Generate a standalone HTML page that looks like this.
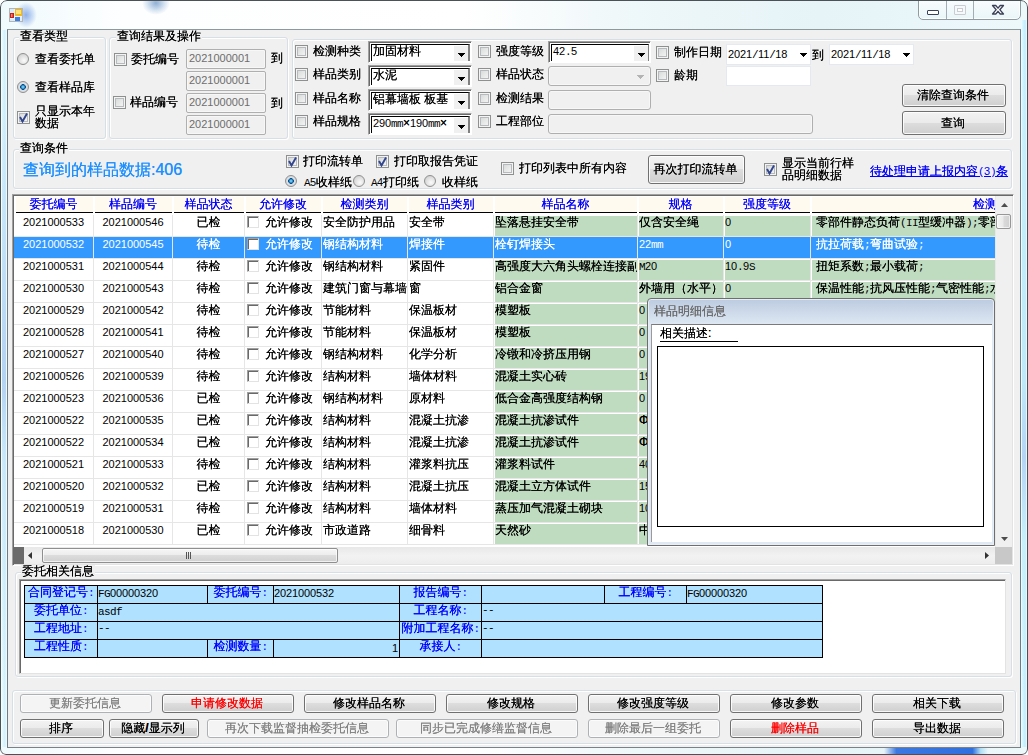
<!DOCTYPE html><html lang="zh-CN"><head><meta charset="utf-8"><title>样品库</title><style>
*{box-sizing:border-box;margin:0;padding:0}
html,body{width:1028px;height:755px;overflow:hidden;background:#fff}
body{font-family:"Liberation Sans","WenQuanYi Zen Hei",sans-serif;font-size:12px;line-height:12px;color:#000;position:relative;text-shadow:0 0 0}
.a{position:absolute}
.t{position:absolute;white-space:nowrap;line-height:12px;font-size:12px}
.n{font-size:11px;text-shadow:none}
.m{font-family:"Liberation Sans","WenQuanYi Zen Hei",sans-serif;font-size:11px;letter-spacing:-.12px;text-shadow:none}
.m i{font-family:"Liberation Mono",monospace;font-size:11px;font-style:normal;letter-spacing:-.6px}
.b{font-weight:bold}
#win{left:0;top:0;width:1028px;height:755px;border-radius:7px 7px 6px 6px;background:linear-gradient(90deg,#f0fafc 0,#fdfeff 12%,#ffffff 45%,#eef7f9 62%,#e6f4f7 80%,#edf8fb 100%);overflow:hidden}
#win:after{content:'';position:absolute;left:0;top:0;right:0;bottom:0;border:1px solid #4a5157;border-radius:7px 7px 6px 6px;pointer-events:none}
#client{left:7px;top:29px;width:1014px;height:719px;background:#f0f0f0;border:1px solid #6e7d85;border-top-color:#8c9a9e;border-bottom-color:#788288}
.gb{position:absolute;border:1px solid #d5dfe5;border-radius:3px;box-shadow:inset 1px 1px 0 #fff, 1px 1px 0 #fff}
.gl{position:absolute;background:#f0f0f0;white-space:nowrap;line-height:12px;padding:0 1px}
.cb{position:absolute;width:13px;height:13px;border:1px solid #8e8f8f;background:linear-gradient(135deg,#d2d4d4 0,#f6f6f6 90%);box-shadow:inset 0 0 0 1px #f4f4f4, inset 0 0 0 2px #b6babd}
.rb{position:absolute;width:12px;height:12px;border-radius:50%;border:1px solid #8e8f8f;background:radial-gradient(circle at 60% 65%,#fbfbfb 0,#dcdcdc 60%,#c4c6c8 100%)}
.rb.on{background:radial-gradient(circle at 50% 50%,#a8e4fb 0,#2a9fdc 20%,#114a86 36%,#dfe2e5 44%,#cfd3d6 100%)}
.tbd{position:absolute;border:1px solid #afafaf;border-radius:2px;background:#f0f0f0;box-shadow:inset 0 0 0 1px #f7f7f7}
.tbw{position:absolute;border:1px solid #e3e9ef;border-top-color:#e6eaee;background:#fff}
.cmb{position:absolute;background:#fff;border:1px solid;border-color:#a0a0a0 #fff #fff #a0a0a0;box-shadow:inset 1px 1px 0 #696969}
.ci{position:absolute;left:2px;top:2px;right:1px;bottom:1px;border:0 solid #808080;border-top:1px solid #000;border-left:1px solid #000}
.cbt{position:absolute;right:0;top:1px;bottom:0;width:14px;background:#f0f0f0}
.arr{position:absolute;width:0;height:0;border-left:3.5px solid transparent;border-right:3.5px solid transparent;border-top:4px solid #000}
.btn{position:absolute;border:1px solid #707070;border-radius:3px;background:linear-gradient(180deg,#f3f3f3 0,#ebebeb 48%,#dddddd 50%,#cfcfcf 100%);box-shadow:inset 0 0 0 1px rgba(255,255,255,.85);text-align:center;white-space:nowrap;padding-right:2px}
.btn.dis{border-color:#adb2b5;background:#f4f4f4;color:#838383;box-shadow:inset 0 0 0 1px #fcfcfc}
.hd{position:absolute;background:#fffaf0;border-bottom:1px solid #000;height:16px}
.ht{position:absolute;color:#0000ff;text-align:center;white-space:nowrap;line-height:12px;height:12px}
.row{position:absolute;left:14px;width:981px;height:22px;background:#fff;overflow:hidden;border-bottom:1px solid #e6e6e6}
.c{position:absolute;top:0;height:21px;overflow:hidden;white-space:nowrap;line-height:12px;padding-top:1px}
.g{background:#c0dcc0;background-clip:padding-box;border-left:1px solid #fff;border-top:1px solid #fff;padding-top:0}
.sel,.sel .g{background:#3399ff;color:#fff;border-color:#3399ff}
.sel{border-bottom-color:#e6e6e6}
.gcb{position:absolute;left:2px;top:1px;width:12px;height:12px;background:#fff;border:1px solid;border-color:#a0a0a0 #e3e3e3 #e3e3e3 #a0a0a0;box-shadow:inset 1px 1px 0 #696969}
.ic{position:absolute;background:#b0e2ff;border:1px solid #000;overflow:hidden;white-space:nowrap;line-height:12px}
.il{color:#0000ff;text-align:center}
</style></head><body>
<div id="win" class="a">
<div class="a" style="left:918px;top:-2px;width:103px;height:22px;border:1px solid #8f9ba3;border-radius:0 0 5px 5px;background:linear-gradient(180deg,#f9fdfe,#eaf5f8);box-shadow:inset 0 0 0 1px rgba(255,255,255,.8)"></div>
<div class="a" style="left:946px;top:0;width:1px;height:19px;background:#a3adb4"></div>
<div class="a" style="left:973px;top:0;width:1px;height:19px;background:#a3adb4"></div>
<div class="a" style="left:927px;top:10px;width:12px;height:5px;border:1px solid #3b4158;border-radius:1px;background:#fff"></div>
<div class="a" style="left:954px;top:5px;width:12px;height:10px;border:1px solid #c9cdd1;border-radius:1px;background:#f6f9fb"></div>
<div class="a" style="left:957px;top:8px;width:6px;height:4px;border:1px solid #c9cdd1;background:#fff"></div>
<svg class="a" style="left:991px;top:4px" width="14" height="12" viewBox="0 0 14 12"><path d="M1.5 1.5h3.3L7 4.2 9.2 1.5h3.3L8.8 5.7l3.7 4.3H9.2L7 7.3 4.8 10H1.5L5.2 5.7z" fill="#fff" stroke="#3b4158" stroke-width="1.3" stroke-linejoin="round"/></svg>
<div class="a" style="left:15px;top:2px;width:22px;height:26px;background:radial-gradient(ellipse at 50% 50%,rgba(115,155,226,.78) 0,rgba(145,180,235,.45) 40%,rgba(200,225,245,0) 70%)"></div>
<div class="a" style="left:142px;top:-9px;width:28px;height:24px;background:radial-gradient(ellipse at 50% 50%,rgba(100,145,195,.72) 0,rgba(150,185,220,.36) 45%,rgba(220,235,245,0) 70%)"></div>
<div class="a" style="left:884px;top:748px;width:104px;height:6px;background:linear-gradient(90deg,rgba(60,120,224,0) 0,#3c78e0 12%,#2f6fdf 85%,rgba(120,200,240,.5) 93%,rgba(60,120,224,0) 100%)"></div>
<div class="a" style="left:1021px;top:20px;width:6px;height:727px;background:linear-gradient(90deg,#f2fdff 0,#d2f6ff 30%,#c2ecfc 70%,#f4fdff 100%)"></div>
<div class="a" style="left:1px;top:30px;width:6px;height:717px;background:linear-gradient(90deg,#fbffff 0,#dcf7fd 35%,#d4f0fb 65%,#f4fdff 100%)"></div>
<div class="a" style="left:1022px;top:60px;width:4px;height:640px;background:linear-gradient(180deg,rgba(190,235,248,0) 0,#c5eefa 20%,#bfe9f8 50%,#b5d4f5 62%,#c8f0fa 75%,rgba(190,235,248,0) 100%)"></div>
<div class="a" style="left:2px;top:60px;width:4px;height:640px;background:linear-gradient(180deg,rgba(190,235,248,0) 0,rgba(190,225,248,.6) 20%,#b4d2f2 50%,rgba(190,225,248,.6) 62%,rgba(190,235,248,0) 100%)"></div>
<svg class="a" style="left:9px;top:8px" width="14" height="14" viewBox="0 0 14 14"><rect x=".5" y=".5" width="13" height="13" fill="#e9f2f8" stroke="#b4b4b4"/><rect x="1" y="1" width="4" height="3.5" fill="#d4ecfb"/><rect x="6" y="1" width="7" height="7" fill="#f2b91f"/><rect x="7" y="2" width="5" height="4" fill="#fde27a"/><rect x="1" y="5" width="4" height="5" fill="#c6201a"/><rect x="2" y="6" width="1.5" height="3" fill="#f08070"/><rect x="6" y="9" width="5" height="4" fill="#3f7fe0"/><rect x="1" y="11" width="2" height="2" fill="#d4ecfb"/><rect x="3.5" y="11" width="1.5" height="2" fill="#d4ecfb"/><rect x="11.5" y="9" width="1.5" height="4" fill="#e4edf5"/></svg>
<div id="client" class="a">
<div class="gb" style="left:5px;top:7px;width:93px;height:102px;"></div>
<div class="gl" style="left:11px;top:0px">查看类型</div>
<div class="rb" style="left:9px;top:23px"></div>
<div class="t " style="left:27px;top:23px;">查看委托单</div>
<div class="rb on" style="left:9px;top:51px"></div>
<div class="t " style="left:27px;top:51px;">查看样品库</div>
<div class="cb" style="left:9px;top:81px"><svg width="11" height="11" viewBox="0 0 11 11" style="position:absolute;left:0;top:0"><path d="M2 5L4.5 9.5L9 1.5" fill="none" stroke="#31458f" stroke-width="1.9"/></svg></div>
<div class="t " style="left:27px;top:75px;line-height:12px">只显示本年<br>数据</div>
<div class="gb" style="left:101px;top:7px;width:179px;height:102px;"></div>
<div class="gl" style="left:108px;top:0px">查询结果及操作</div>
<div class="cb" style="left:106px;top:23px"></div>
<div class="t " style="left:123px;top:23px;">委托编号</div>
<div class="cb" style="left:105px;top:66px"></div>
<div class="t " style="left:122px;top:66px;">样品编号</div>
<div class="tbd" style="left:178px;top:19px;width:80px;height:20px;"></div>
<div class="t n" style="left:181px;top:22px;color:#6d6d6d;text-shadow:none">2021000001</div>
<div class="tbd" style="left:178px;top:41px;width:80px;height:20px;"></div>
<div class="t n" style="left:181px;top:44px;color:#6d6d6d;text-shadow:none">2021000001</div>
<div class="tbd" style="left:178px;top:63px;width:80px;height:20px;"></div>
<div class="t n" style="left:181px;top:66px;color:#6d6d6d;text-shadow:none">2021000001</div>
<div class="tbd" style="left:178px;top:85px;width:80px;height:20px;"></div>
<div class="t n" style="left:181px;top:88px;color:#6d6d6d;text-shadow:none">2021000001</div>
<div class="t " style="left:263px;top:22px;">到</div>
<div class="t " style="left:263px;top:67px;">到</div>
<div class="gb" style="left:284px;top:9px;width:720px;height:100px;"></div>
<div class="cb" style="left:287px;top:15px"></div>
<div class="t " style="left:305px;top:15px;">检测种类</div>
<div class="cmb" style="left:360px;top:11px;width:104px;height:22px"><div class="ci" style="border-right-width:2px"><div class="cbt"></div></div></div>
<svg class="a" style="left:450px;top:23px;" width="7" height="4" viewBox="0 0 7 4" shape-rendering="crispEdges"><path d="M0 0h7v1h-1v1h-1v1h-1v1h-1v-1h-1v-1h-1v-1h-1z" fill="#000"/></svg>
<div class="t " style="left:365px;top:15px;width:81px;overflow:hidden">加固材料</div>
<div class="cb" style="left:287px;top:38px"></div>
<div class="t " style="left:305px;top:38px;">样品类别</div>
<div class="cmb" style="left:360px;top:35px;width:104px;height:22px"><div class="ci" style="border-right-width:2px"><div class="cbt"></div></div></div>
<svg class="a" style="left:450px;top:47px;" width="7" height="4" viewBox="0 0 7 4" shape-rendering="crispEdges"><path d="M0 0h7v1h-1v1h-1v1h-1v1h-1v-1h-1v-1h-1v-1h-1z" fill="#000"/></svg>
<div class="t " style="left:365px;top:39px;width:81px;overflow:hidden">水泥</div>
<div class="cb" style="left:287px;top:62px"></div>
<div class="t " style="left:305px;top:62px;">样品名称</div>
<div class="cmb" style="left:360px;top:59px;width:104px;height:22px"><div class="ci" style="border-right-width:2px"><div class="cbt"></div></div></div>
<svg class="a" style="left:450px;top:71px;" width="7" height="4" viewBox="0 0 7 4" shape-rendering="crispEdges"><path d="M0 0h7v1h-1v1h-1v1h-1v1h-1v-1h-1v-1h-1v-1h-1z" fill="#000"/></svg>
<div class="t " style="left:365px;top:63px;width:81px;overflow:hidden">铝幕墙板 板基</div>
<div class="cb" style="left:287px;top:85px"></div>
<div class="t " style="left:305px;top:85px;">样品规格</div>
<div class="cmb" style="left:360px;top:83px;width:104px;height:22px"><div class="ci" style="border-right-width:2px"><div class="cbt"></div></div></div>
<svg class="a" style="left:450px;top:95px;" width="7" height="4" viewBox="0 0 7 4" shape-rendering="crispEdges"><path d="M0 0h7v1h-1v1h-1v1h-1v1h-1v-1h-1v-1h-1v-1h-1z" fill="#000"/></svg>
<div class="t " style="left:365px;top:87px;width:81px;overflow:hidden"><span class="m">290<i>m</i><i>m</i></span>×<span class="m">190<i>m</i><i>m</i></span>×</div>
<div class="cb" style="left:470px;top:15px"></div>
<div class="t " style="left:488px;top:15px;">强度等级</div>
<div class="cb" style="left:470px;top:38px"></div>
<div class="t " style="left:488px;top:38px;">样品状态</div>
<div class="cb" style="left:470px;top:62px"></div>
<div class="t " style="left:488px;top:62px;">检测结果</div>
<div class="cb" style="left:470px;top:85px"></div>
<div class="t " style="left:488px;top:85px;">工程部位</div>
<div class="cmb" style="left:540px;top:11px;width:103px;height:22px"><div class="ci" style="border-right-width:1px"><div class="cbt"></div></div></div>
<svg class="a" style="left:630px;top:23px;" width="7" height="4" viewBox="0 0 7 4" shape-rendering="crispEdges"><path d="M0 0h7v1h-1v1h-1v1h-1v1h-1v-1h-1v-1h-1v-1h-1z" fill="#000"/></svg>
<div class="t " style="left:545px;top:15px;"><span class="m">42<i>.</i>5</span></div>
<div class="tbd" style="left:540px;top:36px;width:103px;height:20px;border-radius:3px"></div>
<svg class="a" style="left:629px;top:45px;" width="7" height="4" viewBox="0 0 7 4" shape-rendering="crispEdges"><path d="M0 0h7v1h-1v1h-1v1h-1v1h-1v-1h-1v-1h-1v-1h-1z" fill="#b4b4b4"/></svg>
<div class="tbd" style="left:540px;top:60px;width:103px;height:20px;border-radius:3px"></div>
<div class="tbd" style="left:540px;top:84px;width:265px;height:20px;border-radius:3px"></div>
<div class="cb" style="left:648px;top:16px"></div>
<div class="t " style="left:666px;top:16px;">制作日期</div>
<div class="cb" style="left:648px;top:39px"></div>
<div class="t " style="left:666px;top:39px;">龄期</div>
<div class="tbw" style="left:718px;top:14px;width:85px;height:21px;"></div>
<div class="t " style="left:720px;top:18px;"><span class="m">2021<i>/</i>11<i>/</i>18</span></div>
<svg class="a" style="left:792px;top:23px;" width="7" height="4" viewBox="0 0 7 4" shape-rendering="crispEdges"><path d="M0 0h7v1h-1v1h-1v1h-1v1h-1v-1h-1v-1h-1v-1h-1z" fill="#000"/></svg>
<div class="t " style="left:804px;top:19px;">到</div>
<div class="tbw" style="left:821px;top:14px;width:85px;height:21px;"></div>
<div class="t " style="left:823px;top:18px;"><span class="m">2021<i>/</i>11<i>/</i>18</span></div>
<svg class="a" style="left:895px;top:23px;" width="7" height="4" viewBox="0 0 7 4" shape-rendering="crispEdges"><path d="M0 0h7v1h-1v1h-1v1h-1v1h-1v-1h-1v-1h-1v-1h-1z" fill="#000"/></svg>
<div class="tbw" style="left:718px;top:36px;width:85px;height:20px;"></div>
<div class="btn " style="left:894px;top:54px;width:104px;height:23px;line-height:21px;">清除查询条件</div>
<div class="btn " style="left:894px;top:81px;width:104px;height:24px;line-height:22px;">查询</div>
<div class="gb" style="left:5px;top:119px;width:999px;height:40px;"></div>
<div class="gl" style="left:11px;top:112px">查询条件</div>
<div class="t " style="left:15px;top:132px;font-size:16px;line-height:16px;color:#1e90ff">查询到的样品数据:406</div>
<div class="cb" style="left:278px;top:125px"><svg width="11" height="11" viewBox="0 0 11 11" style="position:absolute;left:0;top:0"><path d="M2 5L4.5 9.5L9 1.5" fill="none" stroke="#31458f" stroke-width="1.9"/></svg></div>
<div class="t " style="left:295px;top:125px;">打印流转单</div>
<div class="cb" style="left:368px;top:125px"><svg width="11" height="11" viewBox="0 0 11 11" style="position:absolute;left:0;top:0"><path d="M2 5L4.5 9.5L9 1.5" fill="none" stroke="#31458f" stroke-width="1.9"/></svg></div>
<div class="t " style="left:386px;top:125px;">打印取报告凭证</div>
<div class="rb on" style="left:277px;top:145px"></div>
<div class="t " style="left:296px;top:146px;"><span class="m"><i>A</i>5</span>收样纸</div>
<div class="rb" style="left:345px;top:145px"></div>
<div class="t " style="left:363px;top:146px;"><span class="m"><i>A</i>4</span>打印纸</div>
<div class="rb" style="left:416px;top:145px"></div>
<div class="t " style="left:434px;top:146px;">收样纸</div>
<div class="cb" style="left:493px;top:132px"></div>
<div class="t " style="left:511px;top:132px;">打印列表中所有内容</div>
<div class="btn " style="left:640px;top:125px;width:97px;height:29px;line-height:27px;">再次打印流转单</div>
<div class="cb" style="left:756px;top:133px"><svg width="11" height="11" viewBox="0 0 11 11" style="position:absolute;left:0;top:0"><path d="M2 5L4.5 9.5L9 1.5" fill="none" stroke="#31458f" stroke-width="1.9"/></svg></div>
<div class="t " style="left:774px;top:127px;line-height:12px">显示当前行样<br>品明细数据</div>
<div class="t " style="left:862px;top:135px;color:#0000ff;text-decoration:underline">待处理申请上报内容<span class="m"><i>(</i>3<i>)</i></span>条</div>
<div class="a" style="left:4px;top:164px;width:1002px;height:372px;border:1px solid #a0a0a0;border-right-color:#fff;border-bottom-color:#fff;background:#fff;box-shadow:inset 1px 1px 0 #696969,inset -1px -1px 0 #e3e3e3"></div>
<div class="hd" style="left:8px;top:167px;width:77px;height:16px;"></div>
<div class="ht" style="left:6px;top:168px;width:79px;height:12px;">委托编号</div>
<div class="hd" style="left:87px;top:167px;width:77px;height:16px;"></div>
<div class="ht" style="left:86px;top:168px;width:78px;height:12px;">样品编号</div>
<div class="hd" style="left:166px;top:167px;width:70px;height:16px;"></div>
<div class="ht" style="left:165px;top:168px;width:71px;height:12px;">样品状态</div>
<div class="hd" style="left:238px;top:167px;width:75px;height:16px;"></div>
<div class="ht" style="left:237px;top:168px;width:76px;height:12px;">允许修改</div>
<div class="hd" style="left:315px;top:167px;width:84px;height:16px;"></div>
<div class="ht" style="left:314px;top:168px;width:85px;height:12px;">检测类别</div>
<div class="hd" style="left:401px;top:167px;width:84px;height:16px;"></div>
<div class="ht" style="left:400px;top:168px;width:85px;height:12px;">样品类别</div>
<div class="hd" style="left:487px;top:167px;width:142px;height:16px;"></div>
<div class="ht" style="left:486px;top:168px;width:143px;height:12px;">样品名称</div>
<div class="hd" style="left:631px;top:167px;width:84px;height:16px;"></div>
<div class="ht" style="left:630px;top:168px;width:85px;height:12px;">规格</div>
<div class="hd" style="left:717px;top:167px;width:85px;height:16px;"></div>
<div class="ht" style="left:716px;top:168px;width:86px;height:12px;">强度等级</div>
<div class="hd" style="left:804px;top:167px;width:183px;height:16px;"></div>
<div class="ht" style="left:803px;top:168px;width:184px;height:12px;text-align:left;padding-left:162px;overflow:hidden;">检测内容</div>
<div class="row" style="left:6px;top:185px">
<div class="c n" style="left:0px;width:79px;text-align:center">2021000533</div>
<div class="c n" style="left:80px;width:78px;text-align:center">2021000546</div>
<div class="c " style="left:159px;width:71px;text-align:center">已检</div>
<div class="c " style="left:231px;width:76px;"><div class="gcb"></div><span style="margin-left:20px">允许修改</span></div>
<div class="c " style="left:308px;width:85px;padding-left:1px">安全防护用品</div>
<div class="c " style="left:394px;width:85px;padding-left:1px">安全带</div>
<div class="c g" style="left:480px;width:143px;">坠落悬挂安全带</div>
<div class="c g" style="left:624px;width:85px;">仅含安全绳</div>
<div class="c g" style="left:710px;width:86px;"><span class="m">0</span></div>
<div class="c g" style="left:797px;width:184px;padding-left:4px">零部件静态负荷<span class="m"><i>(</i><i>I</i><i>I</i></span>型缓冲器<span class="m"><i>)</i><i>;</i></span>零部件</div>
</div>
<div class="row sel" style="left:6px;top:207px">
<div class="c n" style="left:0px;width:79px;text-align:center">2021000532</div>
<div class="c n" style="left:80px;width:78px;text-align:center">2021000545</div>
<div class="c " style="left:159px;width:71px;text-align:center">待检</div>
<div class="c " style="left:231px;width:76px;"><div class="gcb"></div><span style="margin-left:20px">允许修改</span></div>
<div class="c " style="left:308px;width:85px;padding-left:1px">钢结构材料</div>
<div class="c " style="left:394px;width:85px;padding-left:1px">焊接件</div>
<div class="c g" style="left:480px;width:143px;">栓钉焊接头</div>
<div class="c g" style="left:624px;width:85px;"><span class="m">22<i>m</i><i>m</i></span></div>
<div class="c g" style="left:710px;width:86px;"><span class="m">0</span></div>
<div class="c g" style="left:797px;width:184px;padding-left:4px">抗拉荷载<span class="m"><i>;</i></span>弯曲试验<span class="m"><i>;</i></span></div>
</div>
<div class="row" style="left:6px;top:229px">
<div class="c n" style="left:0px;width:79px;text-align:center">2021000531</div>
<div class="c n" style="left:80px;width:78px;text-align:center">2021000544</div>
<div class="c " style="left:159px;width:71px;text-align:center">待检</div>
<div class="c " style="left:231px;width:76px;"><div class="gcb"></div><span style="margin-left:20px">允许修改</span></div>
<div class="c " style="left:308px;width:85px;padding-left:1px">钢结构材料</div>
<div class="c " style="left:394px;width:85px;padding-left:1px">紧固件</div>
<div class="c g" style="left:480px;width:143px;">高强度大六角头螺栓连接副</div>
<div class="c g" style="left:624px;width:85px;"><span class="m"><i>M</i>20</span></div>
<div class="c g" style="left:710px;width:86px;"><span class="m">10<i>.</i>9<i>S</i></span></div>
<div class="c g" style="left:797px;width:184px;padding-left:4px">扭矩系数<span class="m"><i>;</i></span>最小载荷<span class="m"><i>;</i></span></div>
</div>
<div class="row" style="left:6px;top:251px">
<div class="c n" style="left:0px;width:79px;text-align:center">2021000530</div>
<div class="c n" style="left:80px;width:78px;text-align:center">2021000543</div>
<div class="c " style="left:159px;width:71px;text-align:center">待检</div>
<div class="c " style="left:231px;width:76px;"><div class="gcb"></div><span style="margin-left:20px">允许修改</span></div>
<div class="c " style="left:308px;width:85px;padding-left:1px;overflow:visible;z-index:2">建筑门窗与幕墙</div>
<div class="c " style="left:394px;width:85px;padding-left:1px">窗</div>
<div class="c g" style="left:480px;width:143px;">铝合金窗</div>
<div class="c g" style="left:624px;width:85px;">外墙用（水平）</div>
<div class="c g" style="left:710px;width:86px;"><span class="m">0</span></div>
<div class="c g" style="left:797px;width:184px;padding-left:4px">保温性能<span class="m"><i>;</i></span>抗风压性能<span class="m"><i>;</i></span>气密性能<span class="m"><i>;</i></span>水密</div>
</div>
<div class="row" style="left:6px;top:273px">
<div class="c n" style="left:0px;width:79px;text-align:center">2021000529</div>
<div class="c n" style="left:80px;width:78px;text-align:center">2021000542</div>
<div class="c " style="left:159px;width:71px;text-align:center">待检</div>
<div class="c " style="left:231px;width:76px;"><div class="gcb"></div><span style="margin-left:20px">允许修改</span></div>
<div class="c " style="left:308px;width:85px;padding-left:1px">节能材料</div>
<div class="c " style="left:394px;width:85px;padding-left:1px">保温板材</div>
<div class="c g" style="left:480px;width:143px;">模塑板</div>
<div class="c g" style="left:624px;width:85px;"><span class="m">0</span></div>
<div class="c g" style="left:710px;width:86px;"></div>
<div class="c g" style="left:797px;width:184px;padding-left:4px"></div>
</div>
<div class="row" style="left:6px;top:295px">
<div class="c n" style="left:0px;width:79px;text-align:center">2021000528</div>
<div class="c n" style="left:80px;width:78px;text-align:center">2021000541</div>
<div class="c " style="left:159px;width:71px;text-align:center">待检</div>
<div class="c " style="left:231px;width:76px;"><div class="gcb"></div><span style="margin-left:20px">允许修改</span></div>
<div class="c " style="left:308px;width:85px;padding-left:1px">节能材料</div>
<div class="c " style="left:394px;width:85px;padding-left:1px">保温板材</div>
<div class="c g" style="left:480px;width:143px;">模塑板</div>
<div class="c g" style="left:624px;width:85px;"><span class="m">0</span></div>
<div class="c g" style="left:710px;width:86px;"></div>
<div class="c g" style="left:797px;width:184px;padding-left:4px"></div>
</div>
<div class="row" style="left:6px;top:317px">
<div class="c n" style="left:0px;width:79px;text-align:center">2021000527</div>
<div class="c n" style="left:80px;width:78px;text-align:center">2021000540</div>
<div class="c " style="left:159px;width:71px;text-align:center">待检</div>
<div class="c " style="left:231px;width:76px;"><div class="gcb"></div><span style="margin-left:20px">允许修改</span></div>
<div class="c " style="left:308px;width:85px;padding-left:1px">钢结构材料</div>
<div class="c " style="left:394px;width:85px;padding-left:1px">化学分析</div>
<div class="c g" style="left:480px;width:143px;">冷镦和冷挤压用钢</div>
<div class="c g" style="left:624px;width:85px;"><span class="m">0</span></div>
<div class="c g" style="left:710px;width:86px;"></div>
<div class="c g" style="left:797px;width:184px;padding-left:4px"></div>
</div>
<div class="row" style="left:6px;top:339px">
<div class="c n" style="left:0px;width:79px;text-align:center">2021000526</div>
<div class="c n" style="left:80px;width:78px;text-align:center">2021000539</div>
<div class="c " style="left:159px;width:71px;text-align:center">待检</div>
<div class="c " style="left:231px;width:76px;"><div class="gcb"></div><span style="margin-left:20px">允许修改</span></div>
<div class="c " style="left:308px;width:85px;padding-left:1px">结构材料</div>
<div class="c " style="left:394px;width:85px;padding-left:1px">墙体材料</div>
<div class="c g" style="left:480px;width:143px;">混凝土实心砖</div>
<div class="c g" style="left:624px;width:85px;"><span class="m">190</span></div>
<div class="c g" style="left:710px;width:86px;"></div>
<div class="c g" style="left:797px;width:184px;padding-left:4px"></div>
</div>
<div class="row" style="left:6px;top:361px">
<div class="c n" style="left:0px;width:79px;text-align:center">2021000523</div>
<div class="c n" style="left:80px;width:78px;text-align:center">2021000536</div>
<div class="c " style="left:159px;width:71px;text-align:center">已检</div>
<div class="c " style="left:231px;width:76px;"><div class="gcb"></div><span style="margin-left:20px">允许修改</span></div>
<div class="c " style="left:308px;width:85px;padding-left:1px">钢结构材料</div>
<div class="c " style="left:394px;width:85px;padding-left:1px">原材料</div>
<div class="c g" style="left:480px;width:143px;">低合金高强度结构钢</div>
<div class="c g" style="left:624px;width:85px;"><span class="m">0</span></div>
<div class="c g" style="left:710px;width:86px;"></div>
<div class="c g" style="left:797px;width:184px;padding-left:4px"></div>
</div>
<div class="row" style="left:6px;top:383px">
<div class="c n" style="left:0px;width:79px;text-align:center">2021000522</div>
<div class="c n" style="left:80px;width:78px;text-align:center">2021000535</div>
<div class="c " style="left:159px;width:71px;text-align:center">已检</div>
<div class="c " style="left:231px;width:76px;"><div class="gcb"></div><span style="margin-left:20px">允许修改</span></div>
<div class="c " style="left:308px;width:85px;padding-left:1px">结构材料</div>
<div class="c " style="left:394px;width:85px;padding-left:1px">混凝土抗渗</div>
<div class="c g" style="left:480px;width:143px;">混凝土抗渗试件</div>
<div class="c g" style="left:624px;width:85px;">Φ</div>
<div class="c g" style="left:710px;width:86px;"></div>
<div class="c g" style="left:797px;width:184px;padding-left:4px"></div>
</div>
<div class="row" style="left:6px;top:405px">
<div class="c n" style="left:0px;width:79px;text-align:center">2021000522</div>
<div class="c n" style="left:80px;width:78px;text-align:center">2021000534</div>
<div class="c " style="left:159px;width:71px;text-align:center">已检</div>
<div class="c " style="left:231px;width:76px;"><div class="gcb"></div><span style="margin-left:20px">允许修改</span></div>
<div class="c " style="left:308px;width:85px;padding-left:1px">结构材料</div>
<div class="c " style="left:394px;width:85px;padding-left:1px">混凝土抗渗</div>
<div class="c g" style="left:480px;width:143px;">混凝土抗渗试件</div>
<div class="c g" style="left:624px;width:85px;">Φ</div>
<div class="c g" style="left:710px;width:86px;"></div>
<div class="c g" style="left:797px;width:184px;padding-left:4px"></div>
</div>
<div class="row" style="left:6px;top:427px">
<div class="c n" style="left:0px;width:79px;text-align:center">2021000521</div>
<div class="c n" style="left:80px;width:78px;text-align:center">2021000533</div>
<div class="c " style="left:159px;width:71px;text-align:center">待检</div>
<div class="c " style="left:231px;width:76px;"><div class="gcb"></div><span style="margin-left:20px">允许修改</span></div>
<div class="c " style="left:308px;width:85px;padding-left:1px">结构材料</div>
<div class="c " style="left:394px;width:85px;padding-left:1px">灌浆料抗压</div>
<div class="c g" style="left:480px;width:143px;">灌浆料试件</div>
<div class="c g" style="left:624px;width:85px;"><span class="m">40</span></div>
<div class="c g" style="left:710px;width:86px;"></div>
<div class="c g" style="left:797px;width:184px;padding-left:4px"></div>
</div>
<div class="row" style="left:6px;top:449px">
<div class="c n" style="left:0px;width:79px;text-align:center">2021000520</div>
<div class="c n" style="left:80px;width:78px;text-align:center">2021000532</div>
<div class="c " style="left:159px;width:71px;text-align:center">已检</div>
<div class="c " style="left:231px;width:76px;"><div class="gcb"></div><span style="margin-left:20px">允许修改</span></div>
<div class="c " style="left:308px;width:85px;padding-left:1px">结构材料</div>
<div class="c " style="left:394px;width:85px;padding-left:1px">混凝土抗压</div>
<div class="c g" style="left:480px;width:143px;">混凝土立方体试件</div>
<div class="c g" style="left:624px;width:85px;"><span class="m">150</span></div>
<div class="c g" style="left:710px;width:86px;"></div>
<div class="c g" style="left:797px;width:184px;padding-left:4px"></div>
</div>
<div class="row" style="left:6px;top:471px">
<div class="c n" style="left:0px;width:79px;text-align:center">2021000519</div>
<div class="c n" style="left:80px;width:78px;text-align:center">2021000531</div>
<div class="c " style="left:159px;width:71px;text-align:center">待检</div>
<div class="c " style="left:231px;width:76px;"><div class="gcb"></div><span style="margin-left:20px">允许修改</span></div>
<div class="c " style="left:308px;width:85px;padding-left:1px">结构材料</div>
<div class="c " style="left:394px;width:85px;padding-left:1px">墙体材料</div>
<div class="c g" style="left:480px;width:143px;">蒸压加气混凝土砌块</div>
<div class="c g" style="left:624px;width:85px;"><span class="m">100</span></div>
<div class="c g" style="left:710px;width:86px;"></div>
<div class="c g" style="left:797px;width:184px;padding-left:4px"></div>
</div>
<div class="row" style="left:6px;top:493px">
<div class="c n" style="left:0px;width:79px;text-align:center">2021000518</div>
<div class="c n" style="left:80px;width:78px;text-align:center">2021000530</div>
<div class="c " style="left:159px;width:71px;text-align:center">已检</div>
<div class="c " style="left:231px;width:76px;"><div class="gcb"></div><span style="margin-left:20px">允许修改</span></div>
<div class="c " style="left:308px;width:85px;padding-left:1px">市政道路</div>
<div class="c " style="left:394px;width:85px;padding-left:1px">细骨料</div>
<div class="c g" style="left:480px;width:143px;">天然砂</div>
<div class="c g" style="left:624px;width:85px;">中砂</div>
<div class="c g" style="left:710px;width:86px;"></div>
<div class="c g" style="left:797px;width:184px;padding-left:4px"></div>
</div>
<div class="a" style="left:85px;top:185px;width:1px;height:330px;background:#e6e6e6;z-index:3"></div>
<div class="a" style="left:164px;top:185px;width:1px;height:330px;background:#e6e6e6;z-index:3"></div>
<div class="a" style="left:236px;top:185px;width:1px;height:330px;background:#e6e6e6;z-index:3"></div>
<div class="a" style="left:313px;top:185px;width:1px;height:330px;background:#e6e6e6;z-index:3"></div>
<div class="a" style="left:399px;top:185px;width:1px;height:330px;background:#e6e6e6;z-index:3"></div>
<div class="a" style="left:485px;top:185px;width:1px;height:330px;background:#e6e6e6;z-index:3"></div>
<div class="a" style="left:629px;top:185px;width:1px;height:330px;background:#e6e6e6;z-index:3"></div>
<div class="a" style="left:715px;top:185px;width:1px;height:330px;background:#e6e6e6;z-index:3"></div>
<div class="a" style="left:802px;top:185px;width:1px;height:330px;background:#e6e6e6;z-index:3"></div>
<div class="a" style="left:987px;top:166px;width:17px;height:351px;background:#f0f0f0;border-left:1px solid #e8e8e8;z-index:4"></div>
<svg class="a" style="left:993px;top:173px;z-index:4" width="7" height="4" viewBox="0 0 7 4"><path d="M3.5 0L7 4H0z" fill="#4d4d4d"/></svg>
<div class="a" style="left:988px;top:184px;width:15px;height:15px;z-index:4;border:1px solid #979797;border-radius:2px;background:linear-gradient(90deg,#f5f5f5 0,#e9e9e9 48%,#dadada 52%,#d0d0d0 100%);box-shadow:inset 0 0 0 1px rgba(255,255,255,.6)"></div>
<svg class="a" style="left:993px;top:507px;z-index:4" width="7" height="4" viewBox="0 0 7 4"><path d="M0 0H7L3.5 4z" fill="#4d4d4d"/></svg>
<div class="a" style="left:6px;top:517px;width:981px;height:17px;background:linear-gradient(180deg,#e8e8e8,#f2f2f2 50%,#ededed)"></div>
<div class="a" style="left:6px;top:517px;width:10px;height:17px;background:#6b6b6b"></div>
<svg class="a" style="left:20px;top:522px" width="4" height="7" viewBox="0 0 4 7"><path d="M4 0V7L0 3.5z" fill="#333"/></svg>
<div class="a" style="left:34px;top:518px;width:296px;height:15px;border:1px solid #8f8f8f;border-radius:2px;background:linear-gradient(180deg,#f6f6f6 0,#ececec 48%,#dcdcdc 50%,#d0d0d0 100%);box-shadow:inset 0 0 0 1px rgba(255,255,255,.7)"></div>
<div class="a" style="left:178px;top:522px;width:1px;height:7px;background:#555"></div>
<div class="a" style="left:180px;top:522px;width:1px;height:7px;background:#555"></div>
<div class="a" style="left:182px;top:522px;width:1px;height:7px;background:#555"></div>
<svg class="a" style="left:977px;top:522px" width="4" height="7" viewBox="0 0 4 7"><path d="M0 0V7L4 3.5z" fill="#333"/></svg>
<div class="a" style="left:987px;top:517px;width:17px;height:17px;background:#c8c8c8"></div>
<div class="a" style="left:639px;top:268px;width:348px;height:248px;z-index:5;border:1px solid #6e6e6e;border-radius:4px 4px 0 0;background:linear-gradient(180deg,#bccbe0 0,#dce6f2 24px,#dfe8f3 25px,#dfe8f3 100%);box-shadow:inset 0 0 0 1px #e8eef6"></div>
<div class="t " style="left:646px;top:275px;color:#6b6b6b;z-index:6">样品明细信息</div>
<div class="a" style="left:643px;top:294px;width:341px;height:218px;z-index:6;background:#fff;border-top:1px solid #7a7a7a;border-left:1px solid #9a9a9a"></div>
<div class="t " style="left:652px;top:297px;z-index:7">相关描述:</div>
<div class="a" style="left:652px;top:311px;width:78px;height:1px;background:#000;z-index:7"></div>
<div class="a" style="left:649px;top:316px;width:327px;height:181px;border:1px solid #000;background:#fff;z-index:7"></div>
<div class="gb" style="left:7px;top:542px;width:997px;height:105px;"></div>
<div class="gl" style="left:13px;top:535px">委托相关信息</div>
<div class="a" style="left:11px;top:549px;width:987px;height:95px;background:#fff;border:1px solid;border-color:#a0a0a0 #e3e3e3 #e3e3e3 #a0a0a0;box-shadow:inset 1px 1px 0 #696969"></div>
<div class="ic il" style="left:16px;top:555px;width:74px;height:19px;padding-top:0">合同登记号<span class="m"><i>:</i></span></div>
<div class="ic " style="left:89px;top:555px;width:111px;height:19px;padding:1px 0 0 0;"><span class="m"><i>F</i><i>G</i>00000320</span></div>
<div class="ic il" style="left:199px;top:555px;width:67px;height:19px;padding-top:0">委托编号<span class="m"><i>:</i></span></div>
<div class="ic " style="left:265px;top:555px;width:127px;height:19px;padding:1px 0 0 0;"><span class="m">2021000532</span></div>
<div class="ic il" style="left:391px;top:555px;width:83px;height:19px;padding-top:0">报告编号<span class="m"><i>:</i></span></div>
<div class="ic " style="left:473px;top:555px;width:124px;height:19px;padding:1px 0 0 0;"></div>
<div class="ic il" style="left:596px;top:555px;width:83px;height:19px;padding-top:0">工程编号<span class="m"><i>:</i></span></div>
<div class="ic " style="left:678px;top:555px;width:137px;height:19px;padding:1px 0 0 0;"><span class="m"><i>F</i><i>G</i>00000320</span></div>
<div class="ic il" style="left:16px;top:573px;width:74px;height:19px;padding-top:0">委托单位<span class="m"><i>:</i></span></div>
<div class="ic " style="left:89px;top:573px;width:303px;height:19px;padding:1px 0 0 0;"><span class="m"><i>a</i><i>s</i><i>d</i><i>f</i></span></div>
<div class="ic il" style="left:391px;top:573px;width:83px;height:19px;padding-top:0">工程名称<span class="m"><i>:</i></span></div>
<div class="ic " style="left:473px;top:573px;width:342px;height:19px;padding:1px 0 0 0;"><span style="position:relative;top:-2px"><span class="m"><i>-</i><i>-</i></span></span></div>
<div class="ic il" style="left:16px;top:591px;width:74px;height:19px;padding-top:0">工程地址<span class="m"><i>:</i></span></div>
<div class="ic " style="left:89px;top:591px;width:303px;height:19px;padding:1px 0 0 0;"><span style="position:relative;top:-2px"><span class="m"><i>-</i><i>-</i></span></span></div>
<div class="ic il" style="left:391px;top:591px;width:83px;height:19px;padding-top:0">附加工程名称<span class="m"><i>:</i></span></div>
<div class="ic " style="left:473px;top:591px;width:342px;height:19px;padding:1px 0 0 0;"><span style="position:relative;top:-2px"><span class="m"><i>-</i><i>-</i></span></span></div>
<div class="ic il" style="left:16px;top:609px;width:74px;height:19px;padding-top:0">工程性质<span class="m"><i>:</i></span></div>
<div class="ic " style="left:89px;top:609px;width:111px;height:19px;padding:1px 0 0 0;"></div>
<div class="ic il" style="left:199px;top:609px;width:67px;height:19px;padding-top:0">检测数量<span class="m"><i>:</i></span></div>
<div class="ic " style="left:265px;top:609px;width:127px;height:19px;text-align:right;padding:2px 1px 0 0"><span class="m">1</span></div>
<div class="ic il" style="left:391px;top:609px;width:83px;height:19px;padding-top:0">承接人<span class="m"><i>:</i></span></div>
<div class="ic " style="left:473px;top:609px;width:342px;height:19px;padding:1px 0 0 0;"></div>
<div class="gb" style="left:4px;top:660px;width:1004px;height:54px;"></div>
<div class="btn dis" style="left:12px;top:664px;width:132px;height:19px;line-height:17px;">更新委托信息</div>
<div class="btn b" style="left:154px;top:664px;width:132px;height:19px;line-height:17px;color:#f00">申请修改数据</div>
<div class="btn " style="left:296px;top:664px;width:132px;height:19px;line-height:17px;">修改样品名称</div>
<div class="btn " style="left:438px;top:664px;width:132px;height:19px;line-height:17px;">修改规格</div>
<div class="btn " style="left:580px;top:664px;width:132px;height:19px;line-height:17px;">修改强度等级</div>
<div class="btn " style="left:722px;top:664px;width:132px;height:19px;line-height:17px;">修改参数</div>
<div class="btn " style="left:864px;top:664px;width:132px;height:19px;line-height:17px;">相关下载</div>
<div class="btn b" style="left:12px;top:689px;width:84px;height:19px;line-height:17px;">排序</div>
<div class="btn b" style="left:101px;top:689px;width:90px;height:19px;line-height:17px;">隐藏/显示列</div>
<div class="btn dis" style="left:199px;top:689px;width:182px;height:19px;line-height:17px;">再次下载监督抽检委托信息</div>
<div class="btn dis" style="left:388px;top:689px;width:182px;height:19px;line-height:17px;">同步已完成修缮监督信息</div>
<div class="btn dis" style="left:580px;top:689px;width:132px;height:19px;line-height:17px;">删除最后一组委托</div>
<div class="btn b" style="left:722px;top:689px;width:132px;height:19px;line-height:17px;color:#f00">删除样品</div>
<div class="btn " style="left:864px;top:689px;width:132px;height:19px;line-height:17px;">导出数据</div>
</div></div></body></html>
